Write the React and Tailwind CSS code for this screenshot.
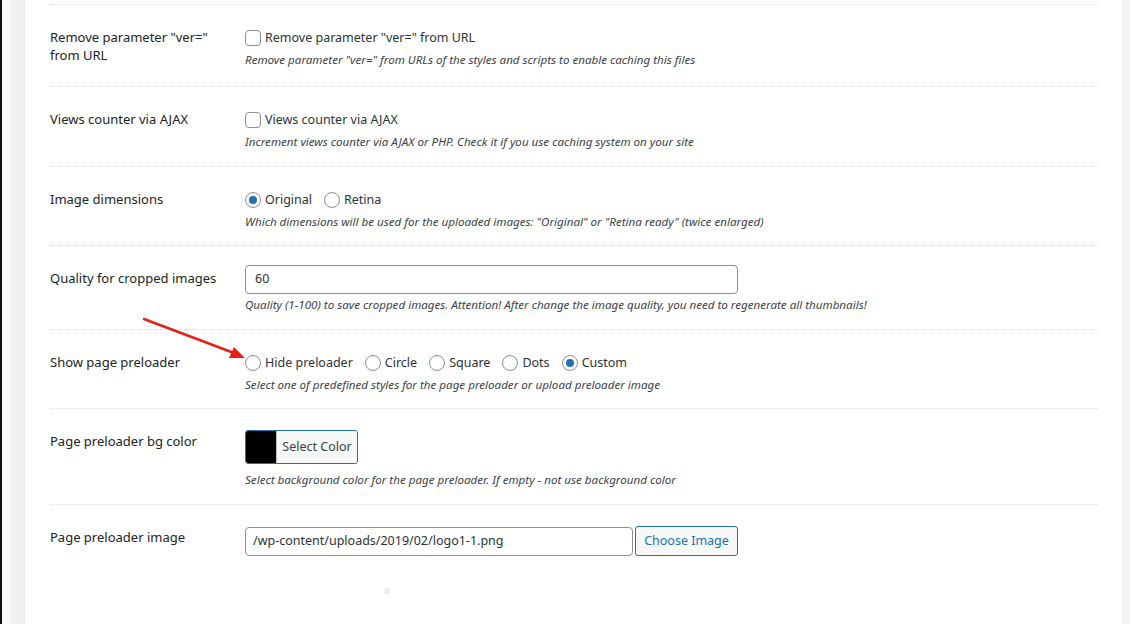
import React from "react";

const font = { fontFamily: '"Noto Sans", "Open Sans", sans-serif' };

function Checkbox() {
  return <span className="inline-block w-[16px] h-[16px] rounded-[4px] border border-[#8c8f94] bg-white shrink-0" />;
}

function Radio({ checked }) {
  return (
    <span className="w-[16px] h-[16px] rounded-full border border-[#8c8f94] bg-white shrink-0 flex items-center justify-center">
      {checked && <span className="w-[8px] h-[8px] rounded-full bg-[#2271b1]" />}
    </span>
  );
}

function Desc({ children, className = "" }) {
  return <p className={"text-[11.6px] italic leading-[16px] text-[#3c434a] " + className}>{children}</p>;
}

function Row({ h, label, children }) {
  return (
    <div className={"flex border-t border-dotted border-[#dcdcde] " + h}>
      <div className="w-[195px] shrink-0 pt-[23px] pr-[10px] text-[13px] leading-[18px] text-[#1d2327]">{label}</div>
      <div className="flex-1 pt-[19px]">{children}</div>
    </div>
  );
}

function RadioItem({ checked, children }) {
  return (
    <label className="flex items-center gap-[4px] mr-[12px]">
      <Radio checked={checked} />
      <span>{children}</span>
    </label>
  );
}

export default function App() {
  return (
    <div className="flex h-[624px] w-[1130px] overflow-hidden bg-white relative" style={font}>
      <div className="w-[2px] bg-[#111] shrink-0" />
      <div className="w-[9px] bg-[#f9f9f9] shrink-0" />
      <div className="w-[14px] bg-[#f0f0f1] shrink-0" />
      <main className="flex-1 bg-white pl-[25px] pr-[25px] pt-[4px]">
        <Row h="h-[82px]" label={<>Remove parameter "ver="<br />from URL</>}>
          <div className="flex items-center h-[28px] gap-[4px] text-[12.5px] text-[#2c3338]">
            <Checkbox />
            <span>Remove parameter "ver=" from URL</span>
          </div>
          <Desc>Remove parameter "ver=" from URLs of the styles and scripts to enable caching this files</Desc>
        </Row>
        <Row h="h-[80px]" label="Views counter via AJAX">
          <div className="flex items-center h-[28px] gap-[4px] text-[12.5px] text-[#2c3338]">
            <Checkbox />
            <span>Views counter via AJAX</span>
          </div>
          <Desc>Increment views counter via AJAX or PHP. Check it if you use caching system on your site</Desc>
        </Row>
        <Row h="h-[79px]" label="Image dimensions">
          <div className="flex items-center h-[28px] text-[12.5px] text-[#2c3338]">
            <RadioItem checked>Original</RadioItem>
            <RadioItem>Retina</RadioItem>
          </div>
          <Desc>Which dimensions will be used for the uploaded images: "Original" or "Retina ready" (twice enlarged)</Desc>
        </Row>
        <Row h="h-[84px]" label="Quality for cropped images">
          <div className="w-[493px] h-[29px] rounded-[4px] border border-[#8c8f94] bg-white flex items-center px-[9px] text-[12.5px] text-[#2c3338]">60</div>
          <Desc className="mt-[3px]">Quality (1-100) to save cropped images. Attention! After change the image quality, you need to regenerate all thumbnails!</Desc>
        </Row>
        <Row h="h-[79px]" label="Show page preloader">
          <div className="flex items-center h-[28px] text-[12.5px] text-[#2c3338]">
            <RadioItem>Hide preloader</RadioItem>
            <RadioItem>Circle</RadioItem>
            <RadioItem>Square</RadioItem>
            <RadioItem>Dots</RadioItem>
            <RadioItem checked>Custom</RadioItem>
          </div>
          <Desc>Select one of predefined styles for the page preloader or upload preloader image</Desc>
        </Row>
        <Row h="h-[96px]" label="Page preloader bg color">
          <div className="mt-[2px] flex w-[113px] h-[34px] rounded-[3px] border border-[#2271b1] overflow-hidden">
            <span className="w-[30px] bg-black shrink-0" />
            <span className="flex-1 bg-[#f6f7f7] border-l border-[#c3c4c7] flex items-center justify-center text-[12.5px] text-[#3c434a]">Select Color</span>
          </div>
          <Desc className="mt-[8px]">Select background color for the page preloader. If empty - not use background color</Desc>
        </Row>
        <Row h="h-[70px]" label="Page preloader image">
          <div className="mt-[2px] flex items-center gap-[2px]">
            <div className="w-[388px] h-[29px] rounded-[4px] border border-[#8c8f94] bg-white flex items-center px-[7px] text-[12.5px] text-[#2c3338]">/wp-content/uploads/2019/02/logo1-1.png</div>
            <div className="w-[103px] h-[30px] rounded-[3px] border border-[#2271b1] bg-[#f6f7f7] flex items-center justify-center text-[12.5px] text-[#2271b1]">Choose Image</div>
          </div>
        </Row>
        <div className="flex pl-[334px] pt-[14px]">
          <span className="w-[6px] h-[6px] rounded-full bg-[#ececec]" />
        </div>
      </main>
      <div className="w-[8px] bg-[#f3f3f4] shrink-0" />
      <svg className="absolute left-0 top-0 pointer-events-none" width="1130" height="624">
        <line x1="144" y1="319" x2="234" y2="353" stroke="#e8201a" strokeWidth="2.5" strokeLinecap="round" />
        <polygon points="245,358 229,358 234,347" fill="#e8201a" />
      </svg>
    </div>
  );
}
